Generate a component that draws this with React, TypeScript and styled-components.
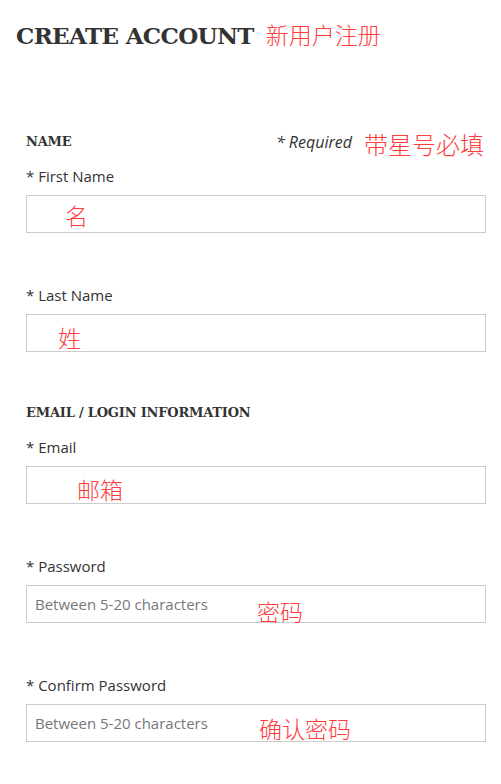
import React from "react";
import styled, { createGlobalStyle } from "styled-components";

const Global = createGlobalStyle`
  html, body { margin: 0; padding: 0; background: #fff; }
  body { font-family: "Open Sans", "Liberation Sans", sans-serif; color: #333; }
  * { box-sizing: border-box; }
`;

const Page = styled.div`
  padding: 20px 15px 40px 16px;
`;

const TitleRow = styled.div`
  display: flex;
  align-items: baseline;
  gap: 12px;
`;

const Title = styled.h1`
  margin: 0;
  font-family: "DejaVu Serif", serif;
  font-weight: 700;
  font-size: 23px;
  line-height: 32px;
  color: #333;
  letter-spacing: -0.65px;
`;

const Note = styled.span<{ $size?: number }>`
  font-family: "Noto Sans CJK SC", sans-serif;
  font-weight: 300;
  font-size: ${(p) => p.$size ?? 23}px;
  line-height: 1;
  color: #ff3d3d;
  white-space: nowrap;
`;

const Form = styled.form`
  padding-left: 10px;
`;

const Section = styled.section<{ $gap: number }>`
  margin-top: ${(p) => p.$gap}px;
`;

const SectionHead = styled.div`
  display: flex;
  justify-content: space-between;
  align-items: flex-start;
  height: 20px;
`;

const Heading = styled.h2`
  margin: 0;
  font-family: "DejaVu Serif", serif;
  font-weight: 700;
  font-size: 13px;
  line-height: 20px;
  color: #333;
  letter-spacing: -0.2px;
`;

const RequiredGroup = styled.div`
  display: flex;
  align-items: flex-start;
  gap: 12px;
  margin-right: 2px;
`;

const Required = styled.em`
  font-size: 16px;
  line-height: 20px;
  color: #333;
`;

const Field = styled.div<{ $first?: boolean }>`
  margin-top: ${(p) => (p.$first ? 14 : 52)}px;
`;

const Label = styled.label`
  display: block;
  font-size: 15px;
  line-height: 20px;
  color: #333;
  margin-bottom: 9px;
`;

const InputWrap = styled.div`
  position: relative;
`;

const Input = styled.input`
  display: block;
  width: 100%;
  height: 38px;
  border: 1px solid #ccc;
  border-radius: 0;
  padding: 0 8px;
  font-family: "Open Sans", "Liberation Sans", sans-serif;
  font-size: 15px;
  color: #333;
  outline: none;
  &::placeholder { color: #777; opacity: 1; }
`;

const Overlay = styled(Note)<{ $left: number; $top: number }>`
  position: absolute;
  left: ${(p) => p.$left}px;
  top: ${(p) => p.$top}px;
  pointer-events: none;
`;

const fieldsName = [
  { label: "First Name", note: "名", left: 39, top: 9 },
  { label: "Last Name", note: "姓", left: 32, top: 12 },
];

const fieldsLogin = [
  { label: "Email", note: "邮箱", left: 51, top: 12 },
  { label: "Password", note: "密码", left: 231, top: 15, ph: "Between 5-20 characters" },
  { label: "Confirm Password", note: "确认密码", left: 233, top: 13, ph: "Between 5-20 characters" },
];

type F = { label: string; note: string; left: number; top: number; ph?: string };

const FieldList = ({ items }: { items: F[] }) => (
  <>
    {items.map((f, i) => (
      <Field key={f.label} $first={i === 0}>
        <Label>* {f.label}</Label>
        <InputWrap>
          <Input
            type={f.ph ? "password" : "text"}
            placeholder={f.ph}
          />
          <Overlay $left={f.left} $top={f.top}>{f.note}</Overlay>
        </InputWrap>
      </Field>
    ))}
  </>
);

export default function App() {
  return (
    <Page>
      <Global />
      <TitleRow>
        <Title>CREATE ACCOUNT</Title>
        <Note>新用户注册</Note>
      </TitleRow>
      <Form onSubmit={(e) => e.preventDefault()}>
        <Section $gap={80}>
          <SectionHead>
            <Heading>NAME</Heading>
            <RequiredGroup>
              <Required>* Required</Required>
              <Note $size={24}>带星号必填</Note>
            </RequiredGroup>
          </SectionHead>
          <FieldList items={fieldsName} />
        </Section>
        <Section $gap={51}>
          <SectionHead>
            <Heading>EMAIL / LOGIN INFORMATION</Heading>
          </SectionHead>
          <FieldList items={fieldsLogin} />
        </Section>
      </Form>
    </Page>
  );
}
